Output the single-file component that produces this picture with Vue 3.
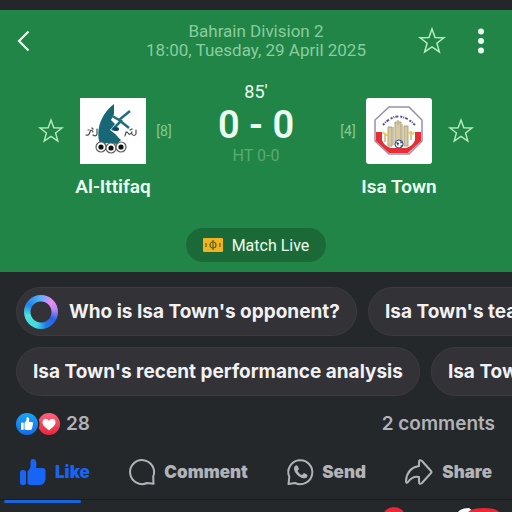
<script setup>
const star = 'M12 1.8l2.6 7.2 7.6.2-6 4.7 2.1 7.4-6.3-4.3-6.3 4.3 2.1-7.4-6-4.7 7.6-.2z'
const suggestions = [
  [
    { text: "Who is Isa Town's opponent?", ring: true },
    { text: "Isa Town's team form" },
  ],
  [
    { text: "Isa Town's recent performance analysis" },
    { text: "Isa Town's squad" },
  ],
]
</script>

<template>
  <main class="post">
    <section class="match">
      <header class="top">
        <button class="icon back" aria-label="Back">
          <svg width="16" height="24" viewBox="0 0 16 24"><path d="M12.500 2.500L3 12l9.500 9.500" fill="none" stroke="currentColor" stroke-width="2.200" /></svg>
        </button>
        <div class="league">
          <div>Bahrain Division 2</div>
          <div>18:00, Tuesday, 29 April 2025</div>
        </div>
        <div class="tools">
          <button class="icon star" aria-label="Favourite match">
            <svg width="28" height="28" viewBox="0 0 24 24"><path :d="star" fill="none" stroke="currentColor" stroke-width="1.300" /></svg>
          </button>
          <button class="icon" aria-label="More">
            <svg width="8" height="28" viewBox="0 0 8 28" fill="currentColor"><circle cx="4" cy="4.500" r="3" /><circle cx="4" cy="14" r="3" /><circle cx="4" cy="23.500" r="3" /></svg>
          </button>
        </div>
      </header>

      <div class="board">
        <button class="side star" aria-label="Favourite Al-Ittifaq">
          <svg width="26" height="28" viewBox="0 0 24 24"><path :d="star" fill="none" stroke="currentColor" stroke-width="1.300" /></svg>
        </button>
        <div class="team">
          <svg class="crest" viewBox="0 0 66 66" role="img" aria-label="Al-Ittifaq crest">
            <rect width="66" height="66" fill="#fff" />
            <path d="M34 6C22 15 15 31 20 46l9-1 8 1 4-4c-3-2-4-5-7-7l-4-3 5-6-4-4 3-6z" fill="#176777" />
            <path d="M32 18l9 5-9 9M50 13L39 22l10 8" fill="none" stroke="#236d80" stroke-width="2.500" />
            <ellipse cx="36" cy="31" rx="3" ry="2" fill="#143f67" />
            <path d="M17 31v5q-1 3-4 1M13 34q-2-4-3 0t-4 3M12 30l1 1M8 32h1M56 32v4q-2 3-4 0M52 34q-2 4-4 1t-3 3M50 32l2-1M46 34h1" fill="none" stroke="#4a4a4d" stroke-width="1.200" stroke-linecap="round" />
            <g fill="#fff" stroke="#5c5c5e" stroke-width="1.200"><circle cx="21" cy="49" r="5" /><circle cx="31" cy="50" r="5" /><circle cx="41" cy="49" r="5" /></g>
            <g fill="#111"><circle cx="21" cy="49" r="2.600" /><circle cx="31" cy="50" r="2.600" /><circle cx="41" cy="49" r="2.600" /></g>
          </svg>
          <strong>Al-Ittifaq</strong>
        </div>
        <span class="side rank">[8]</span>
        <div class="score">
          <span class="minute">85'</span>
          <span class="goals">0 - 0</span>
          <span class="half">HT 0-0</span>
        </div>
        <span class="side rank">[4]</span>
        <div class="team">
          <svg class="crest" viewBox="0 0 66 66" role="img" aria-label="Isa Town crest">
            <rect width="66" height="66" rx="3" fill="#fff" />
            <path d="M23 9h20l13 13v21L43 56H23L9 43V22z" fill="#fff" stroke="#9a8eaa" stroke-width="1.500" />
            <path d="M10 34h45v9L42 55H23L10 43z" fill="#e52f37" />
            <path d="M16 34h33v8q-2 6-9 8H25q-7-2-9-8z" fill="#fff" />
            <path d="M17 27q15-17 32 0" fill="none" stroke="#555b8e" stroke-width="2" stroke-dasharray="2 1 1 1 3 2" />
            <path d="M22 29h4v19h-4zM29 24h6v24h-6zM38 28h4v20h-4z" fill="#d8c9a2" stroke="#aaa38e" />
            <path d="M19 35v9M27 29v18M36 26v21M45 33v9M32 22v5" stroke="#c3b78b" stroke-width="1.500" />
            <path d="M17 34q3 5 5 2M43 34q3 4 5 0" fill="none" stroke="#edc94f" stroke-width="2" />
            <circle cx="33" cy="46" r="4" fill="#fff" stroke="#364b85" /><path d="M30 44l3 1-1 3zM34 43l2 1-1 2zM34 48l2-1v2z" fill="#182e62" />
          </svg>
          <strong>Isa Town</strong>
        </div>
        <button class="side star last" aria-label="Favourite Isa Town">
          <svg width="26" height="28" viewBox="0 0 24 24"><path :d="star" fill="none" stroke="currentColor" stroke-width="1.300" /></svg>
        </button>
      </div>

      <button class="live">
        <svg width="20" height="14" viewBox="0 0 20 14">
          <rect width="20" height="14" rx="1" fill="#f3b321" />
          <path d="M10 2v10M3 5v4M17 5v4" stroke="#54651f" stroke-width="1.200" />
          <circle cx="10" cy="7" r="3" fill="none" stroke="#54651f" stroke-width="1.200" />
        </svg>
        Match Live
      </button>
    </section>

    <section class="suggestions">
      <div v-for="(row, i) in suggestions" :key="i" class="row">
        <button v-for="s in row" :key="s.text" class="chip" :class="{ ai: s.ring }">
          <span v-if="s.ring" class="ring"></span>{{ s.text }}
        </button>
      </div>
    </section>

    <div class="stats">
      <div class="reactions">
        <svg width="45" height="24" viewBox="0 0 45 24" role="img" aria-label="Like and love">
          <defs>
            <linearGradient id="blue" x2="0" y2="1"><stop stop-color="#18a4f6" /><stop offset="1" stop-color="#176be7" /></linearGradient>
            <linearGradient id="red" x2="0" y2="1"><stop stop-color="#ff6378" /><stop offset="1" stop-color="#e9263f" /></linearGradient>
          </defs>
          <circle cx="33" cy="12" r="11" fill="url(#red)" />
          <circle cx="11" cy="12" r="12.500" fill="#25282b" />
          <circle cx="11" cy="12" r="11" fill="url(#blue)" />
          <path d="M33 18.500C28 14.500 26.500 13 26.500 10.300c0-4.300 5-4.500 6.500-1.300 1.500-3.200 6.500-3 6.500 1.300 0 2.700-1.500 4.200-6.500 8.200z" fill="#fff" />
          <rect x="5" y="10.500" width="2.700" height="7.500" rx="1" fill="#fff" />
          <path d="M8.500 17.500V11l2-3V6q0-1 1-.8c2 .3 2 2 1.300 4.800H16q1.500.3 1 2l-1 4.500q-.4 1.500-2 1.500h-4z" fill="#fff" />
        </svg>
        <span>28</span>
      </div>
      <a href="#comments">2 comments</a>
    </div>

    <nav class="actions">
      <button class="liked">
        <svg width="26" height="28" viewBox="0 0 26 28" fill="currentColor">
          <rect y="12" width="6" height="15" rx="2.500" />
          <path d="M7.500 25V13c2-1 3-3 3-6V4c0-2 1-3 2.500-3C16 1 17 4 16 10h6.500c2.500 0 3.500 2 3 4v7c-.6 4-2.500 6-6 6H11c-2 0-3.500-.5-3.500-2z" />
        </svg>Like
      </button>
      <button>
        <svg width="26" height="28" viewBox="0 0 26 28" fill="none" stroke="currentColor" stroke-width="2" stroke-linejoin="round"><path d="M24.200 18.500A12 12 0 1 0 18 25l6.500.8z" /></svg>Comment
      </button>
      <button>
        <svg width="26" height="28" viewBox="0 0 26 28"><path d="M1.500 26l.8-7A12 12 0 1 1 8 25z" fill="none" stroke="currentColor" stroke-width="2" stroke-linejoin="round" /><path d="M8 8c-4 4 5 14 11 12 2-1 1.500-3 1-3.500l-3-1.500-2 2q-3-1-4.500-4l1.500-2-1.500-3.200q-1-1-2.500.2z" fill="currentColor" /></svg>Send
      </button>
      <button>
        <svg width="28" height="28" viewBox="0 0 28 28" fill="none" stroke="currentColor" stroke-width="2" stroke-linejoin="round"><path d="M14 8V4q0-3 3-1l9 10q1 1 0 2l-9 10q-3 2-3-1v-5q-7-1-11 5-2 2-2-1Q2 10 14 8z" /></svg>Share
      </button>
    </nav>

    <footer class="next">
      <span class="progress"></span>
      <svg class="peek" width="142" height="12" viewBox="0 0 142 12" aria-hidden="true">
        <circle cx="24" cy="19" r="12" fill="#ed2534" />
        <path d="M88 12q3-4 11-4l5 4z" fill="#fff" />
        <path d="M98 12q4-4 16-4 12 0 15 4z" fill="#ed2534" />
      </svg>
    </footer>
  </main>
</template>

<style>
body { background: #25282b; }
</style>

<style scoped>
.post { border-top: 10px solid #25262a; overflow: hidden; background: #25282b; color: #b0b3b8; font-family: Inter, sans-serif; }
button { border: 0; padding: 0; margin: 0; background: none; color: inherit; font: inherit; cursor: pointer; }
svg { display: block; flex: none; overflow: visible; }
.match { background: #218548; color: #eaffef; font-family: Roboto, sans-serif; padding: 12px 16px 10px; display: flex; flex-direction: column; align-items: center; }
.top { align-self: stretch; display: grid; grid-template-columns: 80px 1fr 80px; align-items: center; }
.back { justify-self: start; }
.league { display: flex; flex-direction: column; align-items: center; color: #8acd9d; font-size: 17px; line-height: 19px; white-space: nowrap; }
.tools { display: flex; justify-content: space-between; align-items: center; padding: 0 11px 0 2px; }
.star { color: #b5edb9; }
.board { align-self: stretch; display: grid; grid-template-columns: 34px 1fr 20px 2fr 20px 1fr 34px; align-items: start; padding: 0 22px; margin-top: 20px; }
.side { height: 66px; margin-top: 18px; display: flex; align-items: center; }
.last { justify-content: flex-end; }
.team { display: flex; flex-direction: column; align-items: center; gap: 12px; padding-top: 18px; }
.crest { width: 66px; height: 66px; }
.team strong { font-size: 19px; line-height: 22px; font-weight: 600; white-space: nowrap; }
.rank { justify-content: center; font-size: 14px; color: #83cb96; }
.score { display: flex; flex-direction: column; align-items: center; }
.minute { font-size: 18px; line-height: 24px; }
.goals { font-size: 38px; line-height: 42px; font-weight: 600; white-space: nowrap; }
.half { font-size: 16px; line-height: 20px; color: #5aaa73; }
.live { display: flex; align-items: center; gap: 9px; height: 34px; padding: 0 17px; border-radius: 17px; background: #1c6938; font-size: 16px; margin-top: 30px; }
.suggestions { padding: 15px 0 0 16px; display: flex; flex-direction: column; gap: 11px; }
.row { display: flex; gap: 11px; overflow: hidden; }
.chip { flex: none; display: flex; align-items: center; height: 49px; padding: 0 16px; border: 1px solid #3c3b40; border-radius: 25px; background: #333237; color: #f1f1f4; font-size: 19px; font-weight: 700; white-space: nowrap; }
.ai { padding-left: 7px; gap: 11px; }
.ring { width: 34px; height: 34px; border-radius: 50%; background: radial-gradient(circle, #333237 10px, transparent 11px), conic-gradient(#6baaff, #e88df5 45deg, #b789f4 80deg, #2860ec 120deg, #217be9 160deg, #43d7e2 195deg, #52e4da 255deg, #2183ed 300deg, #55b6fa); }
.stats { display: flex; justify-content: space-between; align-items: center; padding: 16px 17px 0 16px; font-size: 19px; line-height: 24px; font-weight: 600; }
.reactions { display: flex; align-items: center; gap: 5px; }
.stats a { color: inherit; text-decoration: none; }
.actions { display: flex; justify-content: space-between; padding: 22px 20px 13px; font-size: 17px; font-weight: 900; }
.actions button { display: flex; align-items: center; gap: 9px; }
.actions .liked { color: #1764f5; }
.next { display: flex; justify-content: space-between; border-top: 1px solid #1b1d20; }
.progress { width: 77px; height: 3px; margin-left: 4px; border-radius: 2px; background: #1764dd; }
</style>
